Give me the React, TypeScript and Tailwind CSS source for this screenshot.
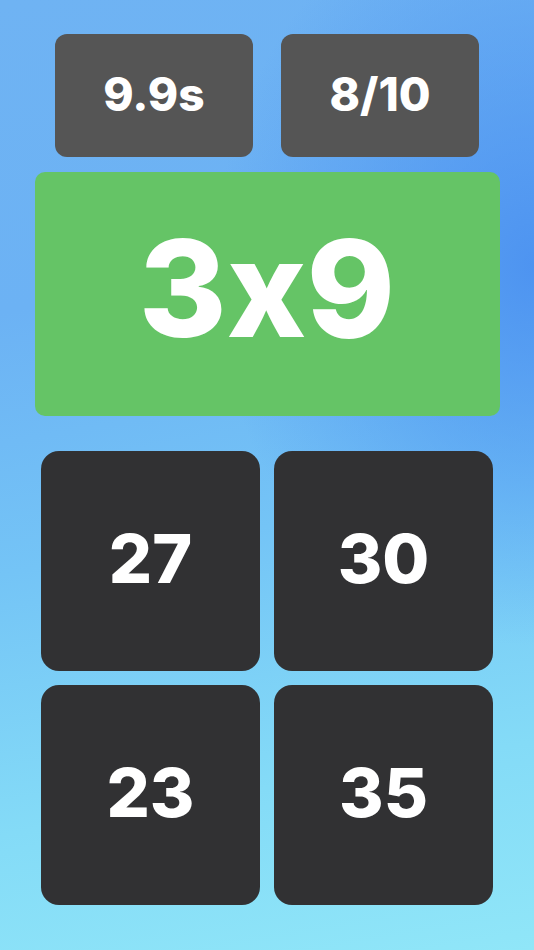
import React from 'react';

const answers = ['27', '30', '23', '35'];

export default function App() {
    return (
        <div
            className="w-[534px] h-[950px] overflow-hidden flex flex-col items-center pt-[34px] bg-[linear-gradient(170deg,#6fb3f3_0%,#6cb2f4_30%,#74c4f6_55%,#84dbf7_80%,#90e6f8_100%)] relative [font-feature-settings:'calt'_0]"
            style={{ fontFamily: 'Inter, "Noto Sans", sans-serif' }}
        >
            <div className="absolute inset-0 bg-[radial-gradient(ellipse_60%_40%_at_100%_28%,rgba(72,142,240,0.85)_0%,rgba(72,142,240,0)_100%)]" />
            <div className="relative flex flex-col items-center">
                {/* stats */}
                <div className="flex gap-[28px]">
                    <div className="w-[198px] h-[123px] rounded-[12px] bg-[#555555] flex items-center justify-center pb-[2px] text-white text-[46px] font-extrabold">
                        9.9s
                    </div>
                    <div className="w-[198px] h-[123px] rounded-[12px] bg-[#555555] flex items-center justify-center pb-[2px] text-white text-[46px] font-extrabold">
                        8/10
                    </div>
                </div>

                {/* question */}
                <div className="mt-[15px] w-[465px] h-[244px] rounded-[10px] bg-[#65c466] flex items-center justify-center pb-[12px] text-white text-[134px] font-extrabold leading-none">
                    3x9
                </div>

                {/* answers */}
                <div className="mt-[35px] grid grid-cols-2 gap-[14px]">
                    {answers.map(a => (
                        <div
                            key={a}
                            className="w-[219px] h-[220px] rounded-[18px] bg-[#313133] flex items-center justify-center pb-[6px] text-white text-[68px] font-extrabold leading-none"
                        >
                            {a}
                        </div>
                    ))}
                </div>
            </div>
        </div>
    );
}
